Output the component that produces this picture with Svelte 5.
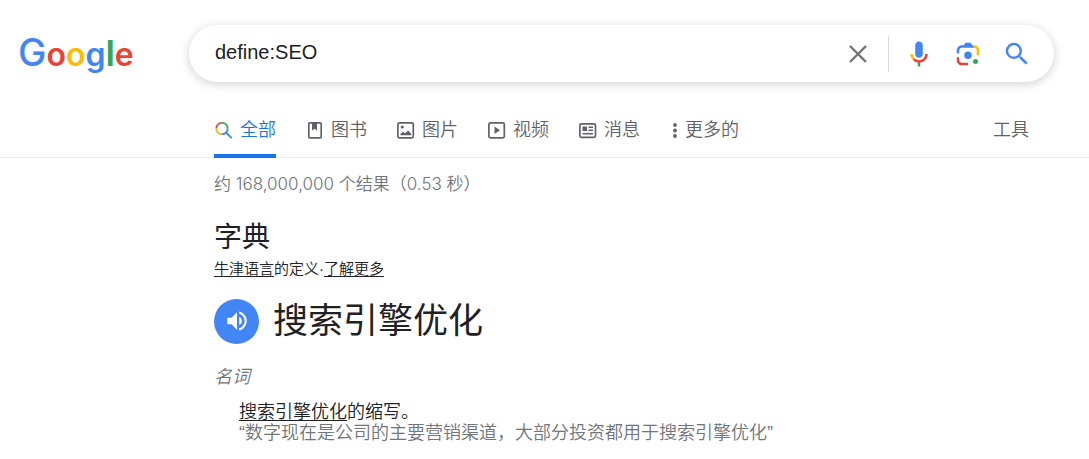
<script lang="ts">
  let query = $state('define:SEO');
  const tabs = [
    { id: 'all', label: '全部' },
    { id: 'books', label: '图书' },
    { id: 'images', label: '图片' },
    { id: 'videos', label: '视频' },
    { id: 'news', label: '消息' }
  ];
</script>

<header>
  <a class="logo" href="#home" aria-label="Google">
    <svg width="120" height="48" viewBox="0 0 120 48" aria-hidden="true">
      <text class="wordmark" y="36"><tspan class="cap" fill="#4285f4">G</tspan><tspan fill="#ea4335">o</tspan><tspan fill="#fbbc05">o</tspan><tspan fill="#4285f4">g</tspan><tspan class="stem" fill="#34a853">l</tspan><tspan fill="#ea4335">e</tspan></text>
    </svg>
  </a>
  <form class="search" role="search" onsubmit={(e) => e.preventDefault()}>
    <input type="text" aria-label="搜索" bind:value={query} />
    <button type="button" class="clear" aria-label="清除" onclick={() => (query = '')}>
      <svg width="20" height="20" viewBox="0 0 20 20"><path d="M2 2l16 16M18 2L2 18" fill="none" stroke="#70757a" stroke-width="2.4" /></svg>
    </button>
    <button type="button" class="voice" aria-label="语音搜索">
      <svg width="30" height="30" viewBox="0 0 24 24">
        <path fill="#4285f4" d="M12 15c1.66 0 3-1.31 3-2.97V4.99C15 3.34 13.66 2 12 2S9 3.34 9 4.99v7.04C9 13.69 10.34 15 12 15z" />
        <path fill="#34a853" d="M11 18.08h2V22h-2z" />
        <path fill="#fbbc05" d="M7.05 16.87A7.06 7.06 0 0 1 5 12h2c0 1.45.56 2.42 1.47 3.38z" />
        <path fill="#ea4335" d="M12 16.93a4.97 4.97 0 0 1-3.54-1.55l-1.41 1.49A6.85 6.85 0 0 0 12 19c3.87 0 6.99-2.92 6.99-7h-1.99c0 2.92-2.24 4.93-5 4.93z" />
      </svg>
    </button>
    <button type="button" aria-label="按图搜索">
      <svg width="30" height="30" viewBox="0 0 192 192">
        <circle fill="#34a853" cx="144.07" cy="144" r="16" />
        <circle fill="#4285f4" cx="96.07" cy="104" r="24" />
        <path fill="#ea4335" d="M24 135.2c0 18.11 14.69 32.8 32.8 32.8H96v-16l-40.1-.1c-8.8 0-15.9-8.19-15.9-17.9v-18H24v19.2z" />
        <path fill="#fbbc05" d="M168 72.8c0-18.11-14.69-32.8-32.8-32.8H116l20 16c8.8 0 16 8.29 16 18v30h16V72.8z" />
        <path fill="#4285f4" d="M112 24H80L68 40H56.8C38.69 40 24 54.69 24 72.8V92h16V74c0-9.71 7.2-18 16-18h80l-12-16-12-16z" />
      </svg>
    </button>
    <button type="submit" aria-label="Google 搜索">
      <svg width="30" height="30" viewBox="0 0 24 24"><path fill="#4285f4" d="M15.5 14h-.79l-.28-.27A6.471 6.471 0 0 0 16 9.5 6.5 6.5 0 1 0 9.500 16c1.610 0 3.090-.59 4.230-1.570l.27.28v.79l5 4.990L20.490 19l-4.990-5zm-6 0C7.010 14 5 11.990 5 9.500S7.010 5 9.500 5 14 7.010 14 9.500 11.990 14 9.500 14z" /></svg>
    </button>
  </form>
</header>

<nav>
  {#each tabs as tab, i}
    <a class="tab" class:active={i === 0} href={'#' + tab.id}>
      <svg width="20" height="20" viewBox="0 0 20 20" fill="none" stroke="#5f6368" stroke-width="1.7" aria-hidden="true">
        {#if tab.id === 'all'}
          <g stroke-width="1.8">
            <path stroke="#ea4335" d="M2.300 8.500A5.700 5.700 0 0 1 8 2.800" />
            <path stroke="#34a853" d="M8 2.800A5.700 5.700 0 0 1 13.700 8.500" />
            <path stroke="#fbbc05" d="M2.300 8.500A5.700 5.700 0 0 0 8 14.200" />
            <path stroke="#4285f4" d="M8 14.200A5.700 5.700 0 0 0 13.700 8.500M12 12.500L17.700 18.200" />
          </g>
        {:else if tab.id === 'books'}
          <rect x="3.800" y="2.800" width="12.400" height="15" rx="1" />
          <path fill="#5f6368" stroke="none" d="M7 3h5v7.500L9.500 8.700 7 10.500z" />
        {:else if tab.id === 'images'}
          <rect x="1.900" y="2.800" width="15.400" height="15" rx="1.500" />
          <path fill="#5f6368" stroke="none" d="M4.500 15.200v-1.500L7 11.800l2 1.400L12.200 10.500l3 3.200v1.500z" />
          <circle cx="6.300" cy="7" r="1.600" fill="#5f6368" stroke="none" />
        {:else if tab.id === 'videos'}
          <rect x="1.900" y="2.800" width="15.400" height="15" rx="1.500" />
          <path fill="#5f6368" stroke="none" d="M7.500 6.500l5.500 3.800-5.500 3.800z" />
        {:else}
          <rect x="1.900" y="3.800" width="15.600" height="13.500" rx="1.500" />
          <path fill="#5f6368" stroke="none" d="M4.500 6.500h4.500v4.500H4.500z" />
          <path stroke-width="1.500" d="M10.500 7.200h4.500M10.500 10.300h4.500M4.500 13.700h10.500" />
        {/if}
      </svg>
      <span>{tab.label}</span>
    </a>
  {/each}
  <button type="button" class="more">
    <svg width="4" height="16" viewBox="0 0 4 16" fill="#5f6368" aria-hidden="true"><circle cx="2" cy="3" r="1.900" /><circle cx="2" cy="8.500" r="1.900" /><circle cx="2" cy="14" r="1.900" /></svg>
    <span>更多的</span>
  </button>
  <button type="button" class="tools">工具</button>
</nav>

<main>
  <p class="stats">约 168,000,000 个结果（0.53 秒）</p>
  <h2>字典</h2>
  <p class="source"><a href="#oxford">牛津语言</a>的定义·<a href="#learn">了解更多</a></p>
  <div class="word">
    <button type="button" aria-label="听发音">
      <svg width="26" height="26" viewBox="0 0 24 24" fill="#fff"><path d="M3 9v6h4l5 5V4L7 9H3zM16.500 12c0-1.770-1.020-3.290-2.500-4.030v8.050c1.480-.73 2.500-2.250 2.500-4.020zM14 3.230v2.060c2.890.86 5 3.540 5 6.710s-2.110 5.850-5 6.710v2.060c4.010-.91 7-4.490 7-8.770s-2.990-7.860-7-8.770z" /></svg>
    </button>
    <h1>搜索引擎优化</h1>
  </div>
  <p class="pos">名词</p>
  <div class="definition">
    <p><a href="#seo">搜索引擎优化</a>的缩写。</p>
    <p class="example">“数字现在是公司的主要营销渠道，大部分投资都用于搜索引擎优化”</p>
  </div>
</main>

<style>
  :global(body) {
    margin: 0;
    background: #fff;
    color: #202124;
    font-family: "Liberation Sans", "Noto Sans CJK SC", sans-serif;
    font-size: 18px;
    font-weight: 350;
  }
  p, h1, h2 { margin: 0; font-weight: 350; }
  button {
    border: 0;
    padding: 0;
    background: none;
    font: inherit;
    color: inherit;
    cursor: pointer;
  }
  svg { display: block; flex: none; }
  header {
    display: flex;
    align-items: center;
    padding: 25px 35px 0 18px;
  }
  .logo { flex: 0 0 171px; }
  .logo svg { overflow: visible; }
  .wordmark { font-family: Inter, sans-serif; font-size: 32px; font-weight: 600; }
  .cap { font-size: 38px; font-weight: 500; }
  .stem { font-size: 36px; }
  .search {
    flex: 1;
    display: flex;
    align-items: center;
    box-sizing: border-box;
    height: 57px;
    padding: 0 22px 0 26px;
    border-radius: 29px;
    box-shadow: 0 2px 8px 1px rgba(64, 60, 67, 0.2);
  }
  .search input {
    flex: 1;
    min-width: 0;
    border: 0;
    outline: 0;
    padding: 0 0 3px;
    background: none;
    color: #202124;
    font: 400 20px "Liberation Sans", sans-serif;
  }
  .search button { margin-left: 19px; }
  .search .clear { margin: 0; padding-right: 20px; }
  .search .voice {
    margin: 0;
    padding: 3px 0 3px 15px;
    border-left: 1px solid #dadce0;
  }
  nav {
    display: flex;
    gap: 29px;
    height: 52px;
    margin-top: 23px;
    padding: 0 60px 0 214px;
    border-bottom: 1px solid #ebebeb;
    color: #5f6368;
    line-height: 50px;
  }
  .tab {
    display: flex;
    align-items: center;
    gap: 6px;
    box-sizing: border-box;
    height: 53px;
    border-bottom: 4px solid transparent;
    color: inherit;
    text-decoration: none;
  }
  .active { color: #1a73e8; border-color: #1a73e8; }
  .more { display: flex; align-items: center; gap: 8px; height: 50px; margin-left: 4px; }
  .tools { margin-left: auto; height: 50px; }
  main { padding: 13px 35px 0 214px; }
  .stats {
    color: #70757a;
    font: 350 17px/26px Inter, "Noto Sans CJK SC", sans-serif;
  }
  h2 { margin-top: 20px; font-size: 28px; line-height: 42px; font-weight: 400; }
  .source { font-size: 15px; line-height: 20px; }
  a { color: inherit; text-underline-offset: 2px; }
  .word { display: flex; align-items: center; gap: 14px; margin-top: 16px; }
  .word button {
    display: grid;
    place-items: center;
    width: 45px;
    height: 45px;
    border-radius: 50%;
    background: #4285f4;
  }
  h1 { font-size: 35px; line-height: 52px; font-weight: 400; }
  .pos { margin-top: 16px; color: #70757a; font-style: italic; line-height: 28px; }
  .definition { margin-top: 11px; padding-left: 25px; line-height: 21px; }
  .example { color: #70757a; }
</style>
